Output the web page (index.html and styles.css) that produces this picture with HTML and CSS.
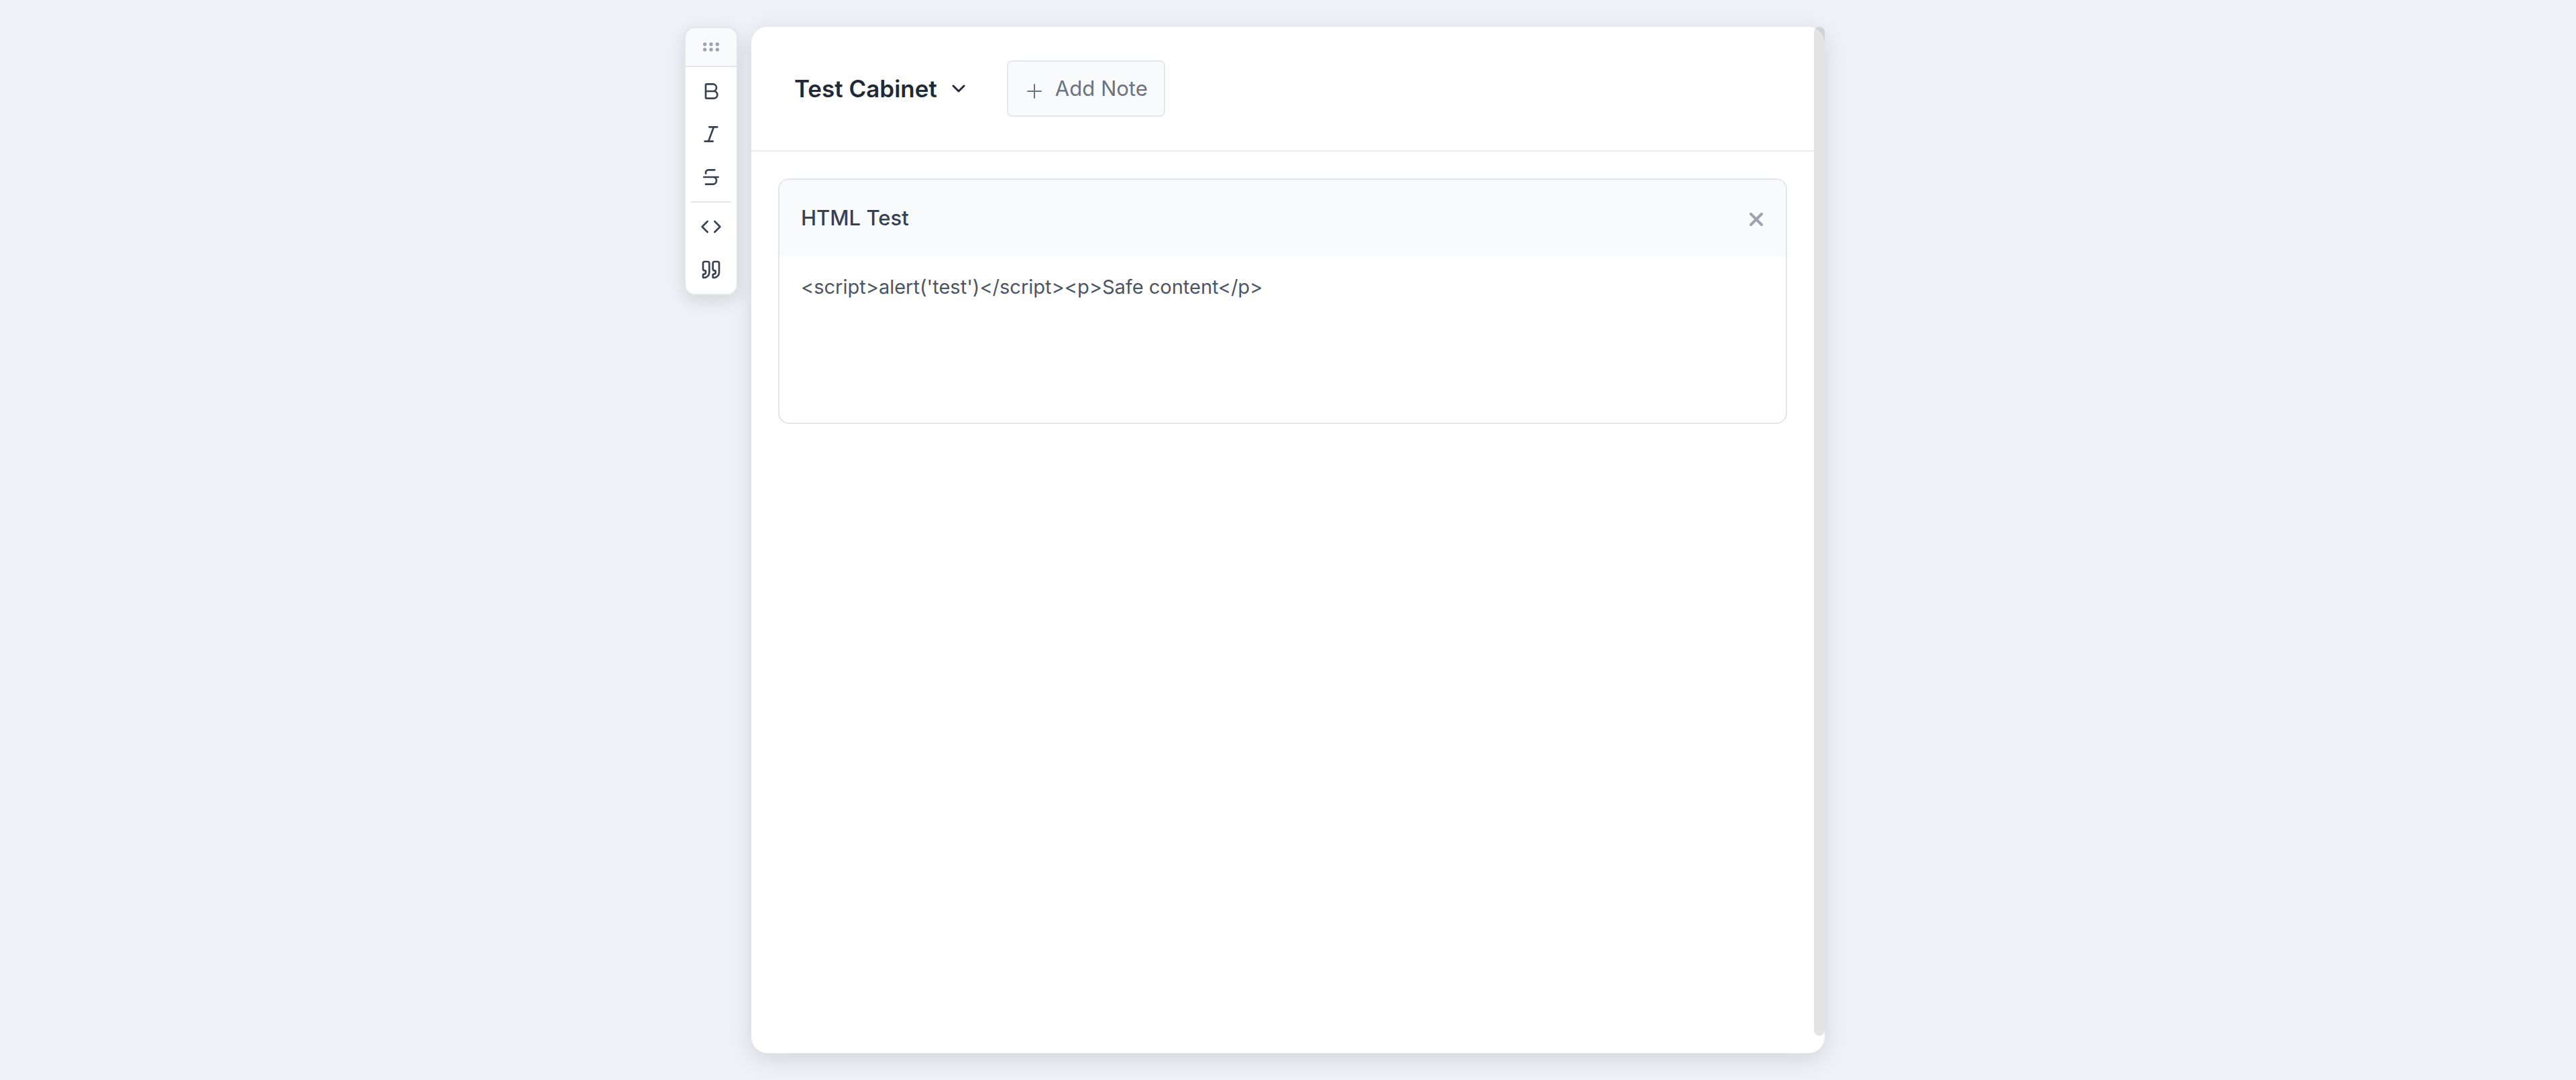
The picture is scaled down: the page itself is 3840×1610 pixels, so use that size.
FILE: index.html
```html
<!DOCTYPE html>
<html lang="en">
<head>
  <meta charset="utf-8">
  <meta name="viewport" content="width=device-width, initial-scale=1">
  <title>Test Cabinet</title>
  <link rel="stylesheet" href="styles.css">
</head>
<body>
  <div class="layout">
    <div class="toolbar" role="toolbar" aria-label="Formatting">
      <div class="toolbar-handle">
        <svg class="dots" viewBox="0 0 24 14" aria-hidden="true">
          <circle cx="2.7" cy="3" r="2.7"/><circle cx="12" cy="3" r="2.7"/><circle cx="21.3" cy="3" r="2.7"/>
          <circle cx="2.7" cy="11" r="2.7"/><circle cx="12" cy="11" r="2.7"/><circle cx="21.3" cy="11" r="2.7"/>
        </svg>
      </div>
      <div class="toolbar-buttons">
        <button class="tool" type="button" aria-label="Bold">
          <svg class="icon" viewBox="0 0 24 24"><path d="M6 12h9a4 4 0 0 1 0 8H7a1 1 0 0 1-1-1V5a1 1 0 0 1 1-1h7a4 4 0 0 1 0 8"/></svg>
        </button>
        <button class="tool" type="button" aria-label="Italic">
          <svg class="icon" viewBox="0 0 24 24"><path d="M19 4h-9M14 20H5M15 4 9 20"/></svg>
        </button>
        <button class="tool" type="button" aria-label="Strikethrough">
          <svg class="icon" viewBox="0 0 24 24"><path d="M16 4H9a3 3 0 0 0-2.83 4M14 12a4 4 0 0 1 0 8H6M4 12h16"/></svg>
        </button>
        <hr class="divider">
        <button class="tool" type="button" aria-label="Code">
          <svg class="icon" viewBox="0 0 24 24"><path d="m16 18 6-6-6-6M8 6l-6 6 6 6"/></svg>
        </button>
        <button class="tool" type="button" aria-label="Quote">
          <svg class="icon" viewBox="0 0 24 24"><path d="M16 3a2 2 0 0 0-2 2v6a2 2 0 0 0 2 2 1 1 0 0 1 1 1v1a2 2 0 0 1-2 2 1 1 0 0 0-1 1v2a1 1 0 0 0 1 1 6 6 0 0 0 6-6V5a2 2 0 0 0-2-2z"/><path d="M5 3a2 2 0 0 0-2 2v6a2 2 0 0 0 2 2 1 1 0 0 1 1 1v1a2 2 0 0 1-2 2 1 1 0 0 0-1 1v2a1 1 0 0 0 1 1 6 6 0 0 0 6-6V5a2 2 0 0 0-2-2z"/></svg>
        </button>
      </div>
    </div>

    <main class="cabinet">
      <header class="cabinet-header">
        <button class="cabinet-switch" type="button" aria-haspopup="listbox">
          Test Cabinet
          <svg class="chevron" viewBox="0 0 24 24" aria-hidden="true"><path d="m4 8 8 8 8-8"/></svg>
        </button>
        <button class="add-note" type="button">
          <svg class="plus" viewBox="0 0 22 22" aria-hidden="true"><path d="M11 1v20M1 11h20"/></svg>
          Add Note
        </button>
      </header>
      <div class="notes">
        <article class="note">
          <div class="note-header">
            <input class="note-title" type="text" value="HTML Test" aria-label="Note title">
            <button class="note-close" type="button" aria-label="Delete note">
              <svg class="cross" viewBox="0 0 20 20"><path d="m2 2 16 16M18 2 2 18"/></svg>
            </button>
          </div>
          <textarea class="note-body" aria-label="Note content" spellcheck="false">&lt;script&gt;alert('test')&lt;/script&gt;&lt;p&gt;Safe content&lt;/p&gt;</textarea>
        </article>
      </div>
      <div class="scroll-thumb" aria-hidden="true"></div>
    </main>
  </div>
</body>
</html>
```

FILE: styles.css
```css
*,
*::before,
*::after {
  box-sizing: border-box;
}

body {
  margin: 0;
  background: #f0f1f6;
  color: #374151;
  font-family: Inter, "Liberation Sans", sans-serif;
}

button,
input,
textarea {
  margin: 0;
  padding: 0;
  border: 0;
  background: none;
  color: inherit;
  font: inherit;
}

button {
  cursor: pointer;
}

svg {
  display: block;
  flex: none;
  fill: none;
  stroke: currentColor;
  stroke-linecap: round;
  stroke-linejoin: round;
}

.layout {
  display: grid;
  grid-template-columns: 1fr minmax(0, 1600px) 1fr;
  min-height: 100vh;
  padding: 40px 0;
}

/* Formatting toolbar */
.toolbar {
  width: 80px;
  margin-right: 20px;
  justify-self: end;
  align-self: start;
  overflow: hidden;
  border: 2px solid #e5e6ea;
  border-radius: 16px;
  background: #fff;
  box-shadow: 0 8px 24px rgba(0, 0, 0, 0.12);
}

.toolbar-handle {
  display: flex;
  align-items: center;
  justify-content: center;
  height: 58px;
  border-bottom: 2px solid #e5e7eb;
  background: #f9fafc;
}

.dots {
  width: 24px;
  height: 14px;
  fill: #9ca3af;
  stroke: none;
}

.toolbar-buttons {
  display: flex;
  flex-direction: column;
  gap: 4px;
  padding: 6px;
}

.tool {
  display: flex;
  align-items: center;
  justify-content: center;
  height: 60px;
  border-radius: 8px;
}

.icon {
  width: 32px;
  height: 32px;
  stroke-width: 2;
}

.divider {
  height: 2px;
  margin: 2px;
  border: 0;
  background: #e5e7eb;
}

/* Cabinet panel */
.cabinet {
  position: relative;
  grid-column: 2;
  padding-right: 16px;
  border-radius: 24px;
  background: #fff;
  box-shadow: 0 8px 32px rgba(0, 0, 0, 0.12);
}

.cabinet-header {
  display: flex;
  align-items: center;
  gap: 60px;
  padding: 50px 64px;
  border-bottom: 2px solid #ebecee;
}

.cabinet-switch {
  display: flex;
  align-items: center;
  gap: 20px;
  color: #1f2937;
  font-size: 35px;
  font-weight: 600;
  line-height: 44px;
}

.chevron {
  width: 24px;
  height: 24px;
  stroke-width: 3;
}

.add-note {
  display: flex;
  align-items: center;
  gap: 20px;
  height: 84px;
  padding: 0 24px 0 28px;
  border: 2px solid #e5e7eb;
  border-radius: 8px;
  background: #f9fafc;
  color: #6b7280;
  font-size: 31px;
  line-height: 40px;
}

.plus {
  width: 22px;
  height: 22px;
  margin-top: 8px;
  stroke-width: 2;
}

.notes {
  padding: 40px;
}

.note {
  overflow: hidden;
  border: 2px solid #e4e5e9;
  border-radius: 16px;
}

.note-header {
  display: flex;
  align-items: center;
  justify-content: space-between;
  height: 114px;
  padding: 0 32px;
  background: #f9fafc;
}

.note-title {
  flex: 1;
  font-size: 31px;
  font-weight: 500;
  line-height: 40px;
}

.note-close {
  padding: 4px 2px 0;
  color: #9ca3af;
}

.cross {
  width: 20px;
  height: 20px;
  stroke-width: 4;
}

.note-body {
  display: block;
  width: 100%;
  height: 248px;
  padding: 22px 32px;
  resize: none;
  outline: 0;
  color: #4b5563;
  font-size: 29px;
  line-height: 48px;
}

.scroll-thumb {
  position: absolute;
  top: 0;
  right: 0;
  bottom: 26px;
  width: 16px;
  border-radius: 8px;
  background: rgba(0, 0, 0, 0.11);
}
```
